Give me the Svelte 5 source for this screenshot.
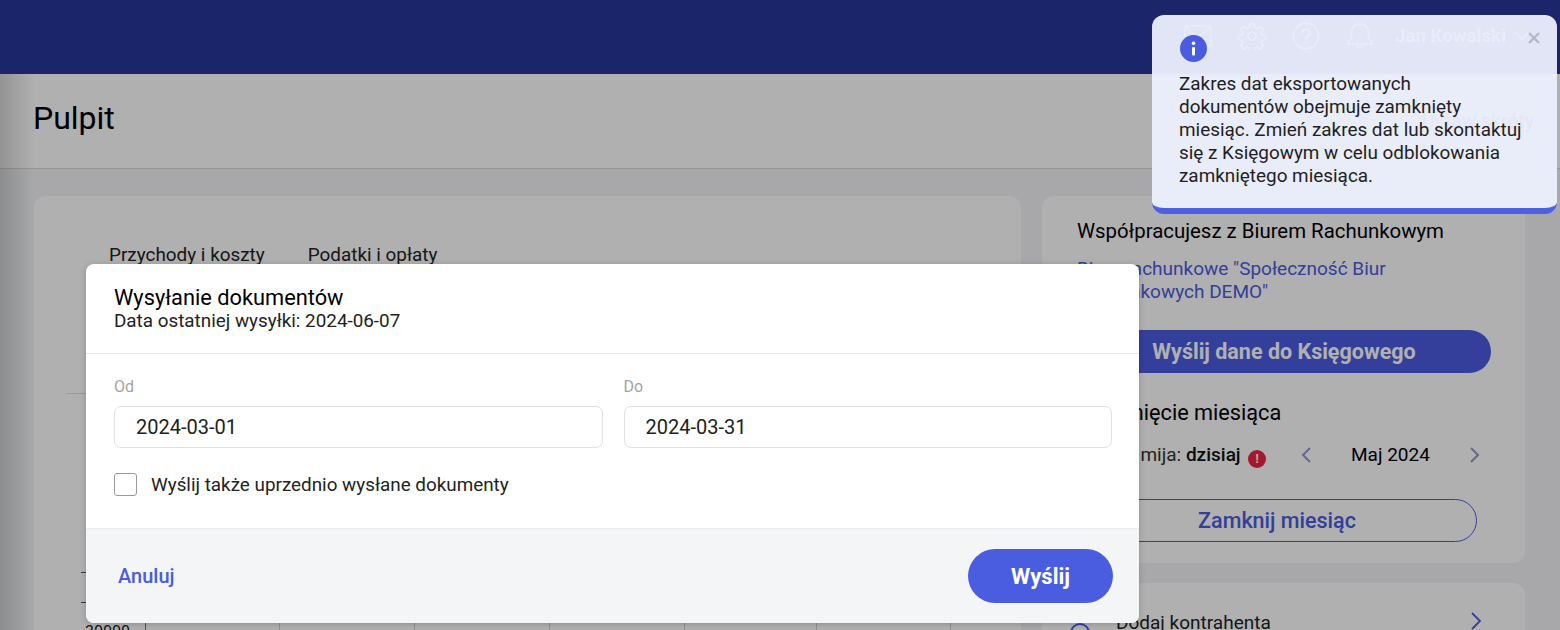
<script>
  const gridLines = [145, 279, 414, 549, 684, 816, 950];
</script>

<div class="page">
  <header class="topbar">
    <div class="user">
      <svg width="28" height="22" viewBox="0 0 28 22" fill="none" stroke="#fff" stroke-width="1.600">
        <rect x="1" y="1" width="26" height="20" rx="2.500" />
        <path d="M1.500 2l12.500 11L26.500 2" />
      </svg>
      <svg width="28" height="28" viewBox="0 0 24 24" fill="none" stroke="#fff" stroke-width="1.300">
        <circle cx="12" cy="12" r="3.400" />
        <path d="M10.300 1.500h3.400l.6 3 2.300 1 2.600-1.700 2.400 2.400-1.700 2.600 1 2.300 3 .6v3.400l-3 .6-1 2.300 1.700 2.600-2.400 2.400-2.600-1.700-2.300 1-.6 3h-3.400l-.6-3-2.300-1-2.600 1.700-2.400-2.400 1.700-2.600-1-2.300-3-.6v-3.400l3-.6 1-2.300-1.700-2.600 2.400-2.400 2.600 1.700 2.300-1z" />
      </svg>
      <svg width="28" height="28" viewBox="0 0 30 30" fill="none" stroke="#fff" stroke-width="1.700">
        <circle cx="15" cy="15" r="13.500" />
        <path d="M11 12a4 4 0 1 1 6 3.400c-1.400.8-2 1.500-2 3" stroke-width="2.200" />
        <circle cx="15" cy="22" r="1.200" fill="#fff" stroke="none" />
      </svg>
      <svg width="28" height="28" viewBox="0 0 30 30" fill="none" stroke="#fff" stroke-width="1.700">
        <path d="M15 2a9 9 0 0 0-9 9v6l-4 5c-.4.8 0 1.500 1 1.500h24c1 0 1.400-.7 1-1.500l-4-5v-6a9 9 0 0 0-9-9z" />
        <path d="M11.500 24a3.500 3.500 0 0 0 7 0" />
      </svg>
      <span class="name">Jan Kowalski</span>
      <svg class="chev" width="16" height="10" viewBox="0 0 16 10" fill="none" stroke="#fff" stroke-width="1.600">
        <path d="M1 1l7 7 7-7" />
      </svg>
    </div>
  </header>

  <div class="title-bar">
    <h1>Pulpit</h1>
    <span class="shortcuts">Ustaw skróty</span>
  </div>

  <main class="content">
    <section class="chart-card">
      <nav class="tabs">
        <span>Przychody i koszty</span>
        <span>Podatki i opłaty</span>
      </nav>
      <div class="chart">
        {#each gridLines as x}
          <i class="grid-line" class:axis={x === 145} style="left: {x - 34}px"></i>
        {/each}
        <span class="rule"></span>
        <span class="tick one"></span>
        <span class="tick two"></span>
        <span class="axis-label">30000</span>
      </div>
    </section>

    <aside class="side">
      <section class="side-card">
        <h2>Współpracujesz z Biurem Rachunkowym</h2>
        <p class="office">Biuro rachunkowe "Społeczność Biur Rachunkowych DEMO"</p>
        <button class="send-data">Wyślij dane do Księgowego</button>
        <h2 class="closing">Zamknięcie miesiąca</h2>
        <div class="month-row">
          <span class="deadline">Termin mija: <b>dzisiaj</b></span>
          <span class="alert">!</span>
          <svg class="arrow-l" width="12" height="16" viewBox="0 0 12 16" fill="none" stroke="#8c9bc9" stroke-width="2">
            <path d="M10 1L3 8l7 7" />
          </svg>
          <span class="month">Maj 2024</span>
          <svg class="arrow-r" width="12" height="16" viewBox="0 0 12 16" fill="none" stroke="#8c9bc9" stroke-width="2">
            <path d="M2 1l7 7-7 7" />
          </svg>
        </div>
        <button class="close-month">Zamknij miesiąc</button>
      </section>
      <section class="side-card small">
        <span class="ring"></span>
        <span class="add">Dodaj kontrahenta</span>
        <svg width="12" height="18" viewBox="0 0 12 18" fill="none" stroke="#4a5ce0" stroke-width="1.800">
          <path d="M2 1l8 8-8 8" />
        </svg>
      </section>
    </aside>
  </main>

  <div class="edge-shadow"></div>
  <div class="overlay"></div>

  <div class="modal">
    <div class="modal-head">
      <h3>Wysyłanie dokumentów</h3>
      <p>Data ostatniej wysyłki: 2024-06-07</p>
    </div>
    <div class="modal-body">
      <div class="fields">
        <label>
          <span>Od</span>
          <input type="text" value="2024-03-01" />
        </label>
        <label>
          <span>Do</span>
          <input type="text" value="2024-03-31" />
        </label>
      </div>
      <div class="check">
        <span class="box"></span>
        <span>Wyślij także uprzednio wysłane dokumenty</span>
      </div>
    </div>
    <div class="modal-foot">
      <a href="#cancel" class="cancel">Anuluj</a>
      <button class="submit">Wyślij</button>
    </div>
  </div>

  <div class="toast">
    <svg class="toast-icon" width="27" height="27" viewBox="0 0 27 27">
      <circle cx="13.500" cy="13.500" r="13.500" fill="#4a5ce0" />
      <rect x="12" y="12" width="3" height="8.500" rx="1" fill="#fff" />
      <circle cx="13.500" cy="8.300" r="1.800" fill="#fff" />
    </svg>
    <svg class="toast-close" width="14" height="14" viewBox="0 0 14 14" fill="none" stroke="#b5b8c4" stroke-width="2.400">
      <path d="M2 2l10 10M12 2L2 12" />
    </svg>
    <p>Zakres dat eksportowanych dokumentów obejmuje zamknięty miesiąc. Zmień zakres dat lub skontaktuj się z Księgowym w celu odblokowania zamkniętego miesiąca.</p>
  </div>
</div>

<style>
  :global(body) {
    margin: 0;
    background: #f3f4f6;
  }

  .page {
    position: relative;
    width: 1560px;
    height: 630px;
    overflow: hidden;
    background: #f3f4f6;
    font-family: Roboto, "Liberation Sans", sans-serif;
    color: #000;
  }

  .topbar {
    height: 74px;
    background: #27369a;
    display: flex;
    justify-content: flex-end;
  }

  .user {
    display: flex;
    align-items: center;
    gap: 26px;
    padding: 0 30px 2px 0;
  }

  .name {
    font-size: 18.700px;
    font-weight: 700;
    color: #fff;
    margin-left: -5px;
    margin-right: -18px;
  }

  .title-bar {
    height: 94px;
    padding: 0 26px 0 33px;
    background: #fff;
    border-bottom: 1px solid #d9d9d9;
    display: flex;
    justify-content: space-between;
    align-items: center;
    box-sizing: content-box;
  }

  h1 {
    margin: 0;
    font-size: 32px;
    font-weight: 400;
    padding-bottom: 6px;
  }

  .shortcuts {
    font-size: 19.500px;
    color: #4a5ce0;
  }

  .content {
    display: flex;
    gap: 21px;
    padding: 27px 35px 0 34px;
  }

  .chart-card {
    width: 987px;
    height: 500px;
    flex: none;
    background: #fff;
    border-radius: 12px;
  }

  .tabs {
    display: flex;
    gap: 43px;
    padding: 48px 0 0 75px;
    font-size: 18.900px;
    line-height: 22px;
    color: #222;
  }

  .chart {
    position: relative;
    height: 400px;
  }

  .grid-line {
    position: absolute;
    top: 336px;
    bottom: 0;
    width: 1px;
    background: #d0d0d0;
  }

  .grid-line.axis {
    background: #777;
  }

  .rule {
    position: absolute;
    left: 33px;
    top: 127px;
    width: 60px;
    height: 1px;
    background: #dcdcdc;
  }

  .tick {
    position: absolute;
    left: 47px;
    width: 6px;
    height: 1px;
    background: #555;
  }

  .tick.one {
    top: 306px;
  }

  .tick.two {
    top: 336px;
  }

  .axis-label {
    position: absolute;
    left: 51px;
    top: 356px;
    font-size: 16px;
    color: #222;
  }

  .side {
    flex: 1;
    display: flex;
    flex-direction: column;
    gap: 20px;
  }

  .side-card {
    background: #fff;
    border-radius: 12px;
    padding: 23px 34px 0 35px;
    height: 367px;
    flex: none;
    box-sizing: border-box;
  }

  h2 {
    margin: 0;
    font-size: 20.400px;
    font-weight: 400;
    line-height: 24px;
  }

  .office {
    margin: 14px 0 0;
    width: 340px;
    font-size: 19px;
    line-height: 23px;
    color: #4a5ce0;
  }

  .send-data {
    display: block;
    margin-top: 27px;
    width: 414px;
    height: 43px;
    border: 0;
    border-radius: 22px;
    background: #4a5ce0;
    color: #fff;
    font: 700 21.500px Roboto, sans-serif;
  }

  .closing {
    margin-top: 28px;
    font-size: 21.700px;
  }

  .month-row {
    position: relative;
    height: 24px;
    margin-top: 18px;
    font-size: 19px;
    line-height: 24px;
  }

  .deadline {
    color: #333;
  }

  .deadline b {
    font-weight: 500;
    color: #111;
  }

  .alert {
    position: absolute;
    left: 171px;
    top: 7px;
    width: 18px;
    height: 18px;
    border-radius: 50%;
    background: #f02244;
    color: #fff;
    font-size: 12px;
    font-weight: 700;
    line-height: 18px;
    text-align: center;
  }

  .arrow-l,
  .arrow-r,
  .month {
    position: absolute;
    top: 4px;
  }

  .arrow-l {
    left: 223px;
  }

  .arrow-r {
    left: 392px;
  }

  .month {
    left: 274px;
    top: 0;
    color: #000;
  }

  .close-month {
    display: block;
    margin-top: 32px;
    width: 400px;
    height: 43px;
    border: 1px solid #4a5ce0;
    border-radius: 22px;
    background: none;
    color: #4a5ce0;
    font: 500 21.500px Roboto, sans-serif;
  }

  .side-card.small {
    display: flex;
    align-items: flex-start;
    padding: 29px 43px 0 28px;
    font-size: 19px;
    line-height: 22px;
    height: 80px;
  }

  .add {
    margin-left: 26px;
    flex: 1;
    color: #222;
  }

  .ring {
    width: 20px;
    height: 20px;
    box-sizing: border-box;
    margin-top: 11px;
    border: 2px solid #4a5ce0;
    border-radius: 50%;
  }

  .edge-shadow {
    position: absolute;
    left: 0;
    top: 74px;
    bottom: 0;
    width: 34px;
    background: linear-gradient(to right, rgba(0, 0, 0, 0.16), rgba(0, 0, 0, 0));
  }

  .overlay {
    position: absolute;
    inset: 0;
    background: rgba(0, 0, 0, 0.31);
  }

  .modal {
    position: absolute;
    left: 86px;
    top: 264px;
    width: 1053px;
    height: 359px;
    border-radius: 8px;
    overflow: hidden;
    background: #fff;
    box-shadow: 0 1px 6px rgba(0, 0, 0, 0.2);
    display: flex;
    flex-direction: column;
  }

  .modal-head {
    height: 90px;
    flex: none;
    padding: 22px 28px 0;
    box-sizing: border-box;
    border-bottom: 1px solid #e5e7eb;
  }

  h3 {
    margin: 0;
    font-size: 21.800px;
    font-weight: 400;
    line-height: 24px;
  }

  .modal-head p {
    margin: 0;
    font-size: 18.850px;
    line-height: 23px;
    color: #222;
  }

  .modal-body {
    height: 175px;
    flex: none;
    padding: 23px 27px 0 28px;
    box-sizing: border-box;
    border-bottom: 1px solid #eceef1;
  }

  .fields {
    display: grid;
    grid-template-columns: 1fr 1fr;
    gap: 21px;
  }

  label span {
    display: block;
    font-size: 16px;
    line-height: 20px;
    color: #a3a3a3;
    margin-bottom: 9px;
  }

  input {
    display: block;
    width: 100%;
    height: 42px;
    box-sizing: border-box;
    padding: 0 21px;
    border: 1px solid #dcdfe3;
    border-radius: 7px;
    font: 400 20px Roboto, sans-serif;
    color: #222;
    outline: none;
  }

  .check {
    display: flex;
    align-items: center;
    gap: 14px;
    margin-top: 25px;
    font-size: 18.850px;
    color: #222;
  }

  .box {
    width: 23px;
    height: 23px;
    box-sizing: border-box;
    border: 1px solid #9a9a9a;
    border-radius: 3px;
  }

  .modal-foot {
    flex: 1;
    background: #f4f5f7;
    display: flex;
    align-items: center;
    justify-content: space-between;
    padding: 0 26px 0 32px;
  }

  .cancel {
    color: #4a5ce0;
    font-size: 20px;
    font-weight: 500;
    text-decoration: none;
  }

  .submit {
    width: 145px;
    height: 54px;
    border: 0;
    border-radius: 27px;
    background: #4a5ce0;
    color: #fff;
    font: 700 22px Roboto, sans-serif;
  }

  .toast {
    position: absolute;
    left: 1152px;
    top: 15px;
    width: 405px;
    height: 199px;
    box-sizing: border-box;
    padding: 57px 33px 0 27px;
    border-radius: 12px;
    border-bottom: 6px solid #4d60e0;
    background: rgba(236, 239, 253, 0.95);
  }

  .toast p {
    margin: 0;
    font-size: 18.900px;
    line-height: 23px;
    color: #1f1f1f;
  }

  .toast-icon {
    position: absolute;
    left: 28px;
    top: 20px;
  }

  .toast-close {
    position: absolute;
    right: 16px;
    top: 16px;
  }
</style>
